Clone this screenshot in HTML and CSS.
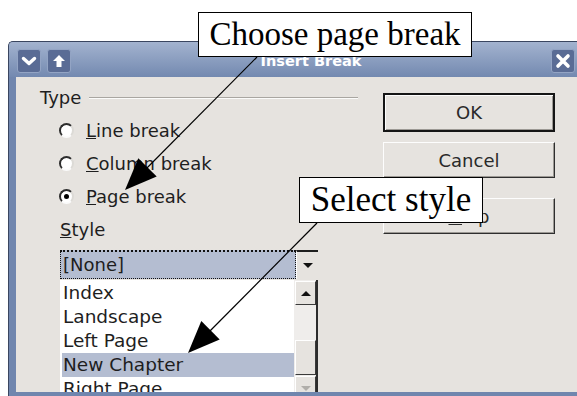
FILE: index.html
```html
<!DOCTYPE html>
<html lang="en">
<head>
    <meta charset="UTF-8">
    <meta name="viewport" content="width=device-width, initial-scale=1.0">
    <title>Insert Break</title>
    <link rel="stylesheet" href="styles.css">
</head>
<body>
    <div class="dialog">
        <div class="titlebar">
            <span class="tbtn">
                <svg width="22" height="22" viewBox="0 0 22 22"><path d="M5.5 8.5 L11 13.5 L16.5 8.5" fill="none" stroke="#fff" stroke-width="3.4" stroke-linecap="round" stroke-linejoin="round"/></svg>
            </span>
            <span class="tbtn second">
                <svg width="22" height="22" viewBox="0 0 22 22"><path d="M11 5 L17 11 L13.5 11 L13.5 17 L8.5 17 L8.5 11 L5 11 Z" fill="#fff"/></svg>
            </span>
            <span class="title">Insert Break</span>
            <span class="tbtn">
                <svg width="22" height="22" viewBox="0 0 22 22"><path d="M6 6 L16 16 M16 6 L6 16" stroke="#fff" stroke-width="3.6" stroke-linecap="round"/></svg>
            </span>
        </div>

        <div class="content">
            <div class="left">
                <div class="group-head">
                    <span>Type</span>
                    <span class="rule"></span>
                </div>
                <div class="radios">
                    <div class="radio"><span class="circle"></span><span><u>L</u>ine break</span></div>
                    <div class="radio"><span class="circle"></span><span><u>C</u>olumn break</span></div>
                    <div class="radio"><span class="circle on"></span><span><u>P</u>age break</span></div>
                </div>
                <div class="label"><u>S</u>tyle</div>
                <div class="combo">
                    <div class="field">[None]</div>
                    <div class="drop"><span class="tri-down"></span></div>
                </div>
                <div class="list">
                    <div class="items">
                        <div class="item">Index</div>
                        <div class="item">Landscape</div>
                        <div class="item">Left Page</div>
                        <div class="item selected">New Chapter</div>
                        <div class="item">Right Page</div>
                    </div>
                    <div class="scrollbar">
                        <div class="sbtn"><span class="tri-up"></span></div>
                        <div class="trough"></div>
                        <div class="thumb"></div>
                        <div class="sbtn"><span class="tri-down grey"></span></div>
                    </div>
                </div>
            </div>

            <div class="buttons">
                <div class="btn default">OK</div>
                <div class="btn">Cancel</div>
                <div class="btn help"><span><u>H</u>elp</span></div>
            </div>
        </div>
    </div>

    <div class="callout choose">Choose page break</div>
    <div class="callout select">Select style</div>

    <svg class="arrows" width="577" height="396" viewBox="0 0 577 396">
        <line x1="257" y1="57" x2="140" y2="175" stroke="#000" stroke-width="1.2"/>
        <polygon points="125,190 156.7,176.5 138.3,158.2" fill="#000"/>
        <line x1="317" y1="223" x2="203" y2="338" stroke="#000" stroke-width="1.2"/>
        <polygon points="188,353 219.7,339.5 201.3,321.1" fill="#000"/>
    </svg>
</body>
</html>
```

FILE: styles.css
```css
body {
    margin: 0;
    width: 577px;
    height: 396px;
    overflow: hidden;
    position: relative;
    background: #fff;
    font-family: "DejaVu Sans", sans-serif;
    font-size: 18px;
    color: #1e1e1e;
}

/* window frame */
.dialog {
    margin: 41px 0 0 8px;
    width: 569px;
    height: 355px;
    box-sizing: border-box;
    background: #7086ae;
    border-top: 1px solid #3a4660;
    border-left: 1px solid #3a4660;
    border-top-left-radius: 5px;
    display: flex;
    flex-direction: column;
}
.titlebar {
    height: 35px;
    box-sizing: border-box;
    padding: 7px 2px 0 8px;
    display: flex;
    align-items: flex-start;
    background: linear-gradient(#a3b3cf, #7389b0);
    border-top-left-radius: 4px;
}
.tbtn {
    width: 24px;
    height: 24px;
    box-sizing: border-box;
    background: #5a6c95;
    border: 1px solid #93a4c4;
    border-radius: 3px;
    display: flex;
    align-items: center;
    justify-content: center;
}
.tbtn.second {
    margin-left: 6px;
}
.title {
    flex: 1;
    text-align: center;
    color: #fff;
    font-weight: bold;
    font-size: 14.5px;
    line-height: 24px;
}

/* dialog body */
.content {
    flex: 1;
    margin: 0 0 4px 7px;
    background: #e6e3df;
    display: flex;
    overflow: hidden;
}
.left {
    width: 318px;
    padding: 11px 0 0 24px;
    display: flex;
    flex-direction: column;
}
.group-head {
    display: flex;
    align-items: center;
    height: 20px;
    line-height: 20px;
}
.rule {
    flex: 1;
    margin-left: 8px;
    height: 1px;
    background: #a9a6a1;
    border-bottom: 1px solid #fbfbfa;
}
.radios {
    margin-top: 6px;
    padding-left: 19px;
}
.radio {
    height: 33px;
    display: flex;
    align-items: center;
    gap: 12px;
}
.circle {
    width: 15px;
    height: 15px;
    box-sizing: border-box;
    border-radius: 50%;
    background: #fff;
    border: 2px solid;
    border-color: #2d2d2d #dcdad6 #fbfbfb #2d2d2d;
    display: flex;
    align-items: center;
    justify-content: center;
}
.circle.on::after {
    content: "";
    width: 5px;
    height: 5px;
    border-radius: 50%;
    background: #000;
}
.label {
    margin-top: 7px;
    padding-left: 20px;
    line-height: 20px;
}

.combo {
    margin: 10px 0 0 20px;
    width: 258px;
    height: 30px;
    display: flex;
}
.field {
    flex: 1;
    background: #b4bdd1;
    border: 1px dotted #111;
    border-top-width: 2px;
    padding-left: 2px;
    line-height: 26px;
}
.drop {
    width: 21px;
    border-top: 2px solid #1e1e1e;
    border-left: 1px solid #fff;
    display: flex;
    align-items: center;
    justify-content: center;
}
.tri-down {
    width: 0;
    height: 0;
    border-left: 5px solid transparent;
    border-right: 5px solid transparent;
    border-top: 5px solid #111;
}
.tri-down.grey {
    border-top-color: #b0aeaa;
}
.tri-up {
    width: 0;
    height: 0;
    border-left: 5px solid transparent;
    border-right: 5px solid transparent;
    border-bottom: 5px solid #111;
}

.list {
    margin: 1px 0 0 20px;
    width: 258px;
    flex: 1;
    display: flex;
    background: #fff;
    padding-left: 2px;
    box-sizing: border-box;
}
.items {
    flex: 1;
    padding-top: 1px;
    font-size: 18.5px;
}
.item {
    height: 24px;
    line-height: 24px;
    padding-left: 1px;
}
.item.selected {
    background: #b4bdd1;
}
.scrollbar {
    width: 21px;
    padding-left: 1px;
    background: #efedeb;
    border-right: 2px solid #2c2c2c;
    display: flex;
    flex-direction: column;
}
.sbtn, .thumb {
    box-sizing: border-box;
    background: #e6e3df;
    border: 1px solid;
    border-color: #fff #3a3a3a #3a3a3a #fff;
}
.sbtn {
    height: 24px;
    margin-top: 1px;
    display: flex;
    align-items: center;
    justify-content: center;
}
.trough {
    height: 35px;
}
.thumb {
    height: 35px;
}

/* buttons column */
.buttons {
    margin-left: 25px;
    padding-top: 16px;
    width: 172px;
}
.btn {
    height: 36px;
    box-sizing: border-box;
    border: 1px solid;
    border-color: #fdfdfd #2e2e2e #2e2e2e #fdfdfd;
    box-shadow: inset -1px -1px #9c9994;
    display: flex;
    align-items: center;
    justify-content: center;
    color: #2a2a2a;
    margin-top: 10px;
}
.btn.default {
    height: 39px;
    margin-top: 0;
    border: 2px solid #151515;
    box-shadow: inset 1px 1px #fdfdfd, inset -1px -1px #9c9994;
}
.btn.help {
    margin-top: 20px;
}

/* annotations */
.callout {
    position: absolute;
    box-sizing: border-box;
    background: #fff;
    border: 1px solid #000;
    font-family: "Liberation Serif", serif;
    color: #000;
    text-align: center;
    white-space: nowrap;
}
.choose {
    left: 198px;
    top: 12px;
    width: 274px;
    height: 45px;
    font-size: 33px;
    line-height: 43px;
}
.select {
    left: 299px;
    top: 177px;
    width: 184px;
    height: 46px;
    font-size: 35px;
    line-height: 44px;
}
.arrows {
    position: absolute;
    left: 0;
    top: 0;
    pointer-events: none;
}
```
